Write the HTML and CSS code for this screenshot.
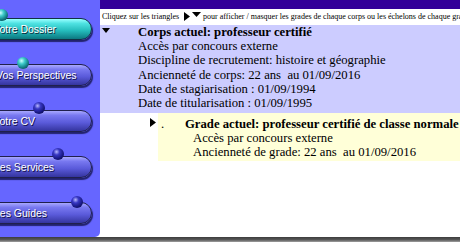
FILE: index.html
```html
<!DOCTYPE html>
<html lang="fr">
<head>
<meta charset="utf-8">
<title>Votre Dossier</title>
<link rel="stylesheet" href="styles.css">
</head>
<body>
<div class="page">
  <nav class="sidebar">
    <a class="btn btn-active b1"><span class="ball ball-teal"></span><span class="label">Votre Dossier</span></a>
    <a class="btn b2"><span class="ball ball-teal"></span><span class="label">Vos Perspectives</span></a>
    <a class="btn b3"><span class="ball ball-navy"></span><span class="label">Votre CV</span></a>
    <a class="btn b4"><span class="ball ball-navy"></span><span class="label">Les Services</span></a>
    <a class="btn b5"><span class="ball ball-navy"></span><span class="label">Les Guides</span></a>
  </nav>
  <main class="main">
    <div class="topbar"></div>
    <div class="hint">Cliquez sur les triangles<svg class="tri-r hint-r" width="6" height="9" viewBox="0 0 6 9"><path d="M0 0L6 4.5L0 9Z"/></svg><svg class="tri-d hint-d" width="9" height="5" viewBox="0 0 9 5"><path d="M0 0H9L4.5 5Z"/></svg> pour afficher / masquer les grades de chaque corps ou les échelons de chaque grade</div>
    <section class="corps">
      <div class="toggle"><svg class="tri-d" width="8" height="5" viewBox="0 0 8 5"><path d="M0 0H8L4 5Z"/></svg></div>
      <div class="lines">
        <div class="title">Corps actuel: professeur certifié</div>
        <div>Accès par concours externe</div>
        <div>Discipline de recrutement: histoire et géographie</div>
        <div>Ancienneté de corps: 22 ans&nbsp; au 01/09/2016</div>
        <div>Date de stagiarisation : 01/09/1994</div>
        <div>Date de titularisation : 01/09/1995</div>
      </div>
    </section>
    <section class="grade">
      <div class="gtoggle"><svg class="tri-r" width="6" height="9" viewBox="0 0 6 9"><path d="M0 0L6 4.5L0 9Z"/></svg></div>
      <div class="gbody">
        <div class="dot">.</div>
        <div class="lines">
          <div class="title">Grade actuel: professeur certifié de classe normale</div>
          <div class="sub">Accès par concours externe</div>
          <div class="sub">Ancienneté de grade: 22 ans&nbsp; au 01/09/2016</div>
        </div>
      </div>
    </section>
  </main>
</div>
<div class="footer"></div>
</body>
</html>
```

FILE: styles.css
```css
* { box-sizing: border-box; }
html, body { margin: 0; padding: 0; }
body {
  width: 460px;
  height: 242px;
  overflow: hidden;
  background: #fff;
  color: #000;
  font-family: "Liberation Serif", "Times New Roman", serif;
}
.page { display: flex; height: 237px; }

/* ---------- sidebar ---------- */
.sidebar {
  width: 100px;
  flex: none;
  background: #6666ff;
  border-bottom-right-radius: 5px;
  display: flex;
  flex-direction: column;
  gap: 24px;
  padding-top: 18px;
  overflow: hidden;
}
.btn {
  position: relative;
  flex: none;
  display: flex;
  align-items: center;
  height: 22px;
  width: 112px;
  margin-left: -20px;
  border: 1px solid #20204c;
  border-radius: 11px;
  background: linear-gradient(#a8a8ff 0%, #7878f0 22%, #5a5ada 58%, #34349e 100%);
  box-shadow: 1px 2px 1px rgba(12, 12, 60, 0.75);
  color: #fff;
  font-family: "Liberation Sans", Arial, sans-serif;
  font-size: 10.5px;
  text-shadow: 1px 1px 0 #14144a;
  white-space: nowrap;
  padding-left: 13px;
}
.btn-active {
  border-color: #123044;
  background: linear-gradient(#9affff 0%, #4fe2e2 22%, #25bcbc 58%, #0c7880 100%);
  text-shadow: 1px 1px 0 #0b2a3a;
}
.b1, .b3 { padding-left: 12px; }
.b2 { padding-left: 15px; }

.ball {
  position: absolute;
  width: 12px;
  height: 12px;
  border-radius: 50%;
}
.ball-teal {
  background: radial-gradient(circle at 38% 32%, #d0ffff 0, #40cccc 28%, #127c84 62%, #052c36 100%);
}
.ball-navy {
  background: radial-gradient(circle at 38% 32%, #b8b8ff 0, #3838c4 28%, #181882 62%, #040428 100%);
}
.b1 .ball { left: 15px; top: -10px; }
.b2 .ball { left: 35.5px; top: -8px; }
.b3 .ball { left: 51.5px; top: -9px; }
.b4 .ball { left: 70.5px; top: -9px; }
.b5 .ball { left: 89.5px; top: -7px; }

/* ---------- main ---------- */
.main {
  flex: 1;
  min-width: 0;
  overflow: hidden;
  background: #fff;
}
.topbar { height: 9px; background: #330099; }
.hint {
  height: 16px;
  line-height: 16px;
  font-size: 8px;
  white-space: nowrap;
  padding-left: 2px;
}
.tri-r, .tri-d { display: inline-block; fill: #000; }
.hint-r { vertical-align: -2px; margin-left: 5px; margin-right: 2px; }
.hint-d { vertical-align: 2px; }

.corps {
  display: flex;
  background: #ccccff;
  padding-bottom: 3px;
  font-size: 12.7px;
  line-height: 14.2px;
}
.corps .toggle { width: 38px; flex: none; padding: 3px 0 0 2px; line-height: 0; }
.lines div { white-space: nowrap; }
.title { font-weight: bold; }

.grade {
  display: flex;
  font-size: 12.7px;
  line-height: 14.2px;
}
.gtoggle { width: 58px; flex: none; padding: 5px 0 0 50px; line-height: 0; }
.gbody {
  flex: 1;
  min-width: 0;
  display: flex;
  background: #ffffd8;
  padding: 3.5px 0 1.5px;
}
.dot { width: 27px; flex: none; padding-left: 3px; }
.sub { padding-left: 8px; }

/* ---------- footer ---------- */
.footer {
  height: 5px;
  background: linear-gradient(#3c3c3c 0%, #585858 55%, #a0a0a0 100%);
}
```
